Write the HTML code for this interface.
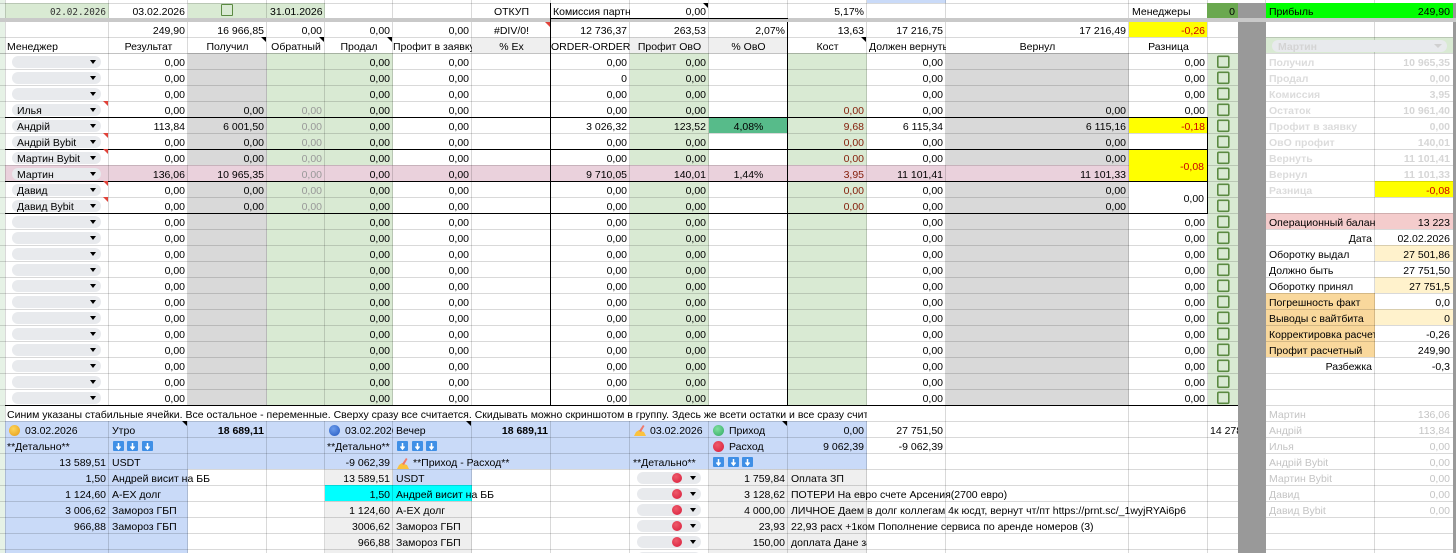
<!DOCTYPE html>
<html><head><meta charset="utf-8"><title>Sheet</title>
<style>
html,body{margin:0;padding:0;background:#fff}
#p{position:relative;width:1456px;height:553px;overflow:hidden;font:10.5px/13px "Liberation Sans",Arial,sans-serif;color:#000}
.r{position:absolute}
table{position:absolute;left:0;top:0;border-collapse:separate;border-spacing:0;table-layout:fixed;width:1456px}
td{padding:0 3px;text-align:right;vertical-align:bottom;white-space:nowrap;height:16px;line-height:11px;box-sizing:border-box}
tr.z td{height:3px;line-height:0;padding:0}tr.a td{height:15px}tr.s td{height:4px;line-height:0;padding:0}
.l{text-align:left}.c{text-align:center}.x{overflow:hidden;text-align:left}
.g{color:#999}.d{color:#85200c}.y{color:#c00}.p{color:#d6d6d6;font-weight:bold}.pl{color:#dcdcdc;font-weight:bold;text-align:left}
.q{color:#c4c4c4}.ql{color:#c4c4c4;text-align:left}.b{font-weight:bold}.f{padding-left:20px}
.m{font-family:"DejaVu Sans Mono",monospace;font-size:9.3px;color:#333}
.k{position:absolute;left:12px;width:89px;height:12px;border-radius:6px;background:#e8eaed;font-size:10.5px;line-height:14px;text-indent:5px}
.k:after{content:"";position:absolute;right:5px;top:4px;border:3px solid transparent;border-top:4px solid #000;border-bottom:0}
.e{position:absolute;left:637px;width:64px;height:12px;border-radius:6px;background:#e8eaed}
.e:before{content:"";position:absolute;left:35px;top:1px;width:10px;height:10px;border-radius:50%;background:radial-gradient(circle at 40% 35%,#ee5a6a,#d81b3a)}
.e:after{content:"";position:absolute;right:5px;top:4px;border:3px solid transparent;border-top:4px solid #000;border-bottom:0}
.t{position:absolute;width:0;height:0;border-left:5px solid transparent;border-top:5px solid #000}
.t.n{border-top-color:#e0433a}
.o{position:absolute;width:11px;height:11px;border-radius:50%}
.cb{position:absolute;width:12px;height:12px;box-sizing:border-box;border:1.5px solid #5b8a42;border-radius:1px}
svg{position:absolute;overflow:visible}
</style></head><body><div id="p">
<!-- backgrounds -->
<div class="r" style="left:0;top:0;width:5px;height:553px;background:#e6f2e6"></div>
<div class="r" style="left:5px;top:3px;width:104px;height:15px;background:#d9ead3"></div>
<div class="r" style="left:188px;top:3px;width:137px;height:15px;background:#d9ead3"></div>
<div class="r" style="left:867px;top:0;width:79px;height:3px;background:#c9daf8"></div>
<div class="r" style="left:1129px;top:22px;width:78px;height:15px;background:#ff0"></div>
<div class="r" style="left:472px;top:37px;width:79px;height:16px;background:#efefef"></div>
<div class="r" style="left:630px;top:37px;width:158px;height:16px;background:#efefef"></div>
<div class="r" style="left:188px;top:53px;width:79px;height:352px;background:#d9d9d9"></div>
<div class="r" style="left:267px;top:53px;width:126px;height:352px;background:#d9ead3"></div>
<div class="r" style="left:630px;top:53px;width:79px;height:352px;background:#d9ead3"></div>
<div class="r" style="left:788px;top:53px;width:79px;height:352px;background:#d9ead3"></div>
<div class="r" style="left:946px;top:53px;width:183px;height:352px;background:#d9d9d9"></div>
<div class="r" style="left:1208px;top:53px;width:30px;height:352px;background:#d9ead3"></div>
<div class="r" style="left:5px;top:165px;width:1124px;height:16px;background:#ead1dc"></div>
<div class="r" style="left:709px;top:117px;width:79px;height:16px;background:#57bb8a"></div>
<div class="r" style="left:1129px;top:117px;width:78px;height:16px;background:#ff0"></div>
<div class="r" style="left:1266px;top:37px;width:187px;height:16px;background:#d9ead3"></div>
<div class="r" style="left:1375px;top:181px;width:78px;height:16px;background:#ff0"></div>
<div class="r" style="left:1266px;top:213px;width:187px;height:16px;background:#f4cccc"></div>
<div class="r" style="left:1375px;top:245px;width:78px;height:16px;background:#fff2cc"></div>
<div class="r" style="left:1375px;top:277px;width:78px;height:16px;background:#fff2cc"></div>
<div class="r" style="left:1375px;top:309px;width:78px;height:16px;background:#fff2cc"></div>
<div class="r" style="left:1266px;top:293px;width:109px;height:64px;background:#f9d89c"></div>
<div class="r" style="left:5px;top:421px;width:862px;height:48px;background:#c9daf8"></div>
<div class="r" style="left:5px;top:469px;width:183px;height:84px;background:#c9daf8"></div>
<div class="r" style="left:325px;top:469px;width:68px;height:16px;background:#efefef"></div>
<div class="r" style="left:393px;top:469px;width:79px;height:16px;background:#c9daf8"></div>
<div class="r" style="left:325px;top:485px;width:147px;height:16px;background:#0ff"></div>
<div class="r" style="left:325px;top:501px;width:147px;height:52px;background:#efefef"></div>
<div class="r" style="left:709px;top:469px;width:158px;height:84px;background:#efefef"></div>
<!-- grid -->
<div class="r" style="left:0;top:0;width:1456px;height:553px;--g:linear-gradient(rgba(0,0,0,.15),rgba(0,0,0,.15));background:var(--g) 5px 0/1px 100% no-repeat,var(--g) 108px 0/1px 100% no-repeat,var(--g) 187px 0/1px 100% no-repeat,var(--g) 266px 0/1px 100% no-repeat,var(--g) 324px 0/1px 100% no-repeat,var(--g) 392px 0/1px 100% no-repeat,var(--g) 471px 0/1px 100% no-repeat,var(--g) 550px 0/1px 100% no-repeat,var(--g) 629px 0/1px 100% no-repeat,var(--g) 708px 0/1px 100% no-repeat,var(--g) 787px 0/1px 100% no-repeat,var(--g) 866px 0/1px 100% no-repeat,var(--g) 945px 0/1px 100% no-repeat,var(--g) 1128px 0/1px 100% no-repeat,var(--g) 1207px 0/1px 100% no-repeat,var(--g) 1265px 0/1px 100% no-repeat,var(--g) 1374px 0/1px 100% no-repeat,var(--g) 0 3px/100% 1px no-repeat,var(--g) 0 37px/100% 1px no-repeat"></div>
<div class="r" style="left:0;top:53px;width:1456px;height:500px;background:repeating-linear-gradient(to bottom,rgba(0,0,0,.15) 0 1px,transparent 1px 16px)"></div>
<div class="r" style="left:0;top:53px;width:1238px;height:1px;background:rgba(0,0,0,.1)"></div>
<!-- covers -->
<div class="r" style="left:6px;top:406px;width:861px;height:15px;background:#fff"></div>
<div class="r" style="left:1129px;top:150px;width:78px;height:31px;background:#ff0"></div>
<div class="r" style="left:1129px;top:182px;width:78px;height:31px;background:#fff"></div>
<div class="r" style="left:1238px;top:3px;width:28px;height:550px;background:#999"></div>
<div class="r" style="left:1453px;top:3px;width:3px;height:550px;background:#999"></div>
<div class="r" style="left:1207px;top:3px;width:31px;height:15px;background:#6aa84f"></div>
<div class="r" style="left:1266px;top:3px;width:187px;height:15px;background:#0f0"></div>
<div class="r" style="left:0;top:18px;width:1456px;height:4px;background:#c9c9c9"></div>
<!-- black lines -->
<div class="r" style="left:551px;top:18px;width:237px;height:1px;background:#000"></div>
<div class="r" style="left:550px;top:3px;width:1px;height:402px;background:#000"></div>
<div class="r" style="left:787px;top:22px;width:1px;height:383px;background:#000"></div>
<div class="r" style="left:1207px;top:117px;width:1px;height:96px;background:#000"></div>
<div class="r" style="left:5px;top:117px;width:1203px;height:1px;background:#000"></div>
<div class="r" style="left:5px;top:149px;width:1203px;height:1px;background:#000"></div>
<div class="r" style="left:5px;top:181px;width:1203px;height:1px;background:#000"></div>
<div class="r" style="left:5px;top:213px;width:1203px;height:1px;background:#000"></div>
<div class="r" style="left:5px;top:405px;width:1233px;height:1px;background:#000"></div>
<!-- text table -->
<table><colgroup><col style="width:5px"><col style="width:104px"><col style="width:79px"><col style="width:79px"><col style="width:58px"><col style="width:68px"><col style="width:79px"><col style="width:79px"><col style="width:79px"><col style="width:79px"><col style="width:79px"><col style="width:79px"><col style="width:79px"><col style="width:183px"><col style="width:79px"><col style="width:30px"><col style="width:28px"><col style="width:109px"><col style="width:78px"><col style="width:3px"></colgroup>
<tr class="z"><td><td><td><td><td><td><td><td><td><td><td><td><td><td><td><td><td><td><td><td></tr>
<tr class="a"><td><td class="m">02.02.2026<td>03.02.2026<td><td>31.01.2026<td><td><td class="c">ОТКУП<td class="x" style="padding-left:2px">Комиссия партн<td>0,00<td><td>5,17%<td><td><td class="x">Менеджеры<td>0<td><td class="l">Прибыль<td>249,90<td></tr>
<tr class="s"><td><td><td><td><td><td><td><td><td><td><td><td><td><td><td><td><td><td><td><td></tr>
<tr class="a"><td><td><td>249,90<td>16 966,85<td>0,00<td>0,00<td>0,00<td class="c">#DIV/0!<td>12 736,37<td>263,53<td>2,07%<td>13,63<td>17 216,75<td>17 216,49<td class="y">-0,26<td><td><td><td><td></tr>
<tr><td><td class="l" style="padding-left:2px">Менеджер<td class="c">Результат<td class="c">Получил<td class="c">Обратный<td class="c">Продал<td class="x" style="padding-left:0;padding-right:0">Профит в заявку<td class="c">% Ex<td class="x" style="padding-left:0;padding-right:0">ORDER-ORDER<td class="c">Профит ОвО<td class="c">% ОвО<td class="c">Кост<td class="x" style="padding-left:2px;padding-right:0">Должен вернуть<td class="c">Вернул<td class="c">Разница<td><td><td><td><td></tr>
<tr><td><td><td>0,00<td><td><td>0,00<td>0,00<td><td>0,00<td>0,00<td><td><td>0,00<td><td>0,00<td><td><td class="pl">Получил<td class="p">10 965,35<td></tr>
<tr><td><td><td>0,00<td><td><td>0,00<td>0,00<td><td>0<td>0,00<td><td><td>0,00<td><td>0,00<td><td><td class="pl">Продал<td class="p">0,00<td></tr>
<tr><td><td><td>0,00<td><td><td>0,00<td>0,00<td><td>0,00<td>0,00<td><td><td>0,00<td><td>0,00<td><td><td class="pl">Комиссия<td class="p">3,95<td></tr>
<tr><td><td><td>0,00<td>0,00<td class="g">0,00<td>0,00<td>0,00<td><td>0,00<td>0,00<td><td class="d">0,00<td>0,00<td>0,00<td>0,00<td><td><td class="pl">Остаток<td class="p">10 961,40<td></tr>
<tr><td><td><td>113,84<td>6 001,50<td class="g">0,00<td>0,00<td>0,00<td><td>3 026,32<td>123,52<td class="c">4,08%<td class="d">9,68<td>6 115,34<td>6 115,16<td class="y">-0,18<td><td><td class="pl">Профит в заявку<td class="p">0,00<td></tr>
<tr><td><td><td>0,00<td>0,00<td class="g">0,00<td>0,00<td>0,00<td><td>0,00<td>0,00<td><td class="d">0,00<td>0,00<td>0,00<td><td><td><td class="pl">ОвО профит<td class="p">140,01<td></tr>
<tr><td><td><td>0,00<td>0,00<td class="g">0,00<td>0,00<td>0,00<td><td>0,00<td>0,00<td><td class="d">0,00<td>0,00<td>0,00<td><td><td><td class="pl">Вернуть<td class="p">11 101,41<td></tr>
<tr><td><td><td>136,06<td>10 965,35<td class="g">0,00<td>0,00<td>0,00<td><td>9 710,05<td>140,01<td class="c">1,44%<td class="d">3,95<td>11 101,41<td>11 101,33<td><td><td><td class="pl">Вернул<td class="p">11 101,33<td></tr>
<tr><td><td><td>0,00<td>0,00<td class="g">0,00<td>0,00<td>0,00<td><td>0,00<td>0,00<td><td class="d">0,00<td>0,00<td>0,00<td><td><td><td class="pl">Разница<td class="y">-0,08<td></tr>
<tr><td><td><td>0,00<td>0,00<td class="g">0,00<td>0,00<td>0,00<td><td>0,00<td>0,00<td><td class="d">0,00<td>0,00<td>0,00<td><td><td><td><td><td></tr>
<tr><td><td><td>0,00<td><td><td>0,00<td>0,00<td><td>0,00<td>0,00<td><td><td>0,00<td><td>0,00<td><td><td class="x">Операционный балан<td>13 223<td></tr>
<tr><td><td><td>0,00<td><td><td>0,00<td>0,00<td><td>0,00<td>0,00<td><td><td>0,00<td><td>0,00<td><td><td>Дата<td>02.02.2026<td></tr>
<tr><td><td><td>0,00<td><td><td>0,00<td>0,00<td><td>0,00<td>0,00<td><td><td>0,00<td><td>0,00<td><td><td class="l">Оборотку выдал<td>27 501,86<td></tr>
<tr><td><td><td>0,00<td><td><td>0,00<td>0,00<td><td>0,00<td>0,00<td><td><td>0,00<td><td>0,00<td><td><td class="l">Должно быть<td>27 751,50<td></tr>
<tr><td><td><td>0,00<td><td><td>0,00<td>0,00<td><td>0,00<td>0,00<td><td><td>0,00<td><td>0,00<td><td><td class="l">Оборотку принял<td>27 751,5<td></tr>
<tr><td><td><td>0,00<td><td><td>0,00<td>0,00<td><td>0,00<td>0,00<td><td><td>0,00<td><td>0,00<td><td><td class="l">Погрешность факт<td>0,0<td></tr>
<tr><td><td><td>0,00<td><td><td>0,00<td>0,00<td><td>0,00<td>0,00<td><td><td>0,00<td><td>0,00<td><td><td class="l">Выводы с вайтбита<td>0<td></tr>
<tr><td><td><td>0,00<td><td><td>0,00<td>0,00<td><td>0,00<td>0,00<td><td><td>0,00<td><td>0,00<td><td><td class="x" style="padding-right:0">Корректировка расчет<td>-0,26<td></tr>
<tr><td><td><td>0,00<td><td><td>0,00<td>0,00<td><td>0,00<td>0,00<td><td><td>0,00<td><td>0,00<td><td><td class="l">Профит расчетный<td>249,90<td></tr>
<tr><td><td><td>0,00<td><td><td>0,00<td>0,00<td><td>0,00<td>0,00<td><td><td>0,00<td><td>0,00<td><td><td>Разбежка<td>-0,3<td></tr>
<tr><td><td><td>0,00<td><td><td>0,00<td>0,00<td><td>0,00<td>0,00<td><td><td>0,00<td><td>0,00<td><td><td><td><td></tr>
<tr><td><td><td>0,00<td><td><td>0,00<td>0,00<td><td>0,00<td>0,00<td><td><td>0,00<td><td>0,00<td><td><td><td><td></tr>
<tr><td><td colspan="11" class="x" style="padding-left:2px;padding-right:0">Синим указаны стабильные ячейки. Все остальное - переменные. Сверху сразу все считается. Скидывать можно скриншотом в группу. Здесь же всети остатки и все сразу считается<td><td><td><td><td><td class="ql">Мартин<td class="q">136,06<td></tr>
<tr><td><td class="l f">03.02.2026<td class="l">Утро<td class="b">18 689,11<td><td class="x f" style="padding-right:0">03.02.2026<td class="l">Вечер<td class="b">18 689,11<td><td class="l f">03.02.2026<td class="l f">Приход<td>0,00<td>27 751,50<td><td><td class="x" style="padding-left:2px;padding-right:0">14 278<td><td class="ql">Андрій<td class="q">113,84<td></tr>
<tr><td><td class="l" style="padding-left:2px">**Детально**<td><td><td><td class="l" style="padding-left:2px;padding-right:0">**Детально**<td><td><td><td><td class="l f">Расход<td>9 062,39<td>-9 062,39<td><td><td><td><td class="ql">Илья<td class="q">0,00<td></tr>
<tr><td><td>13 589,51<td class="l">USDT<td><td><td>-9 062,39<td class="l f">**Приход - Расход**<td><td><td class="l">**Детально**<td><td><td><td><td><td><td><td class="ql">Андрій Bybit<td class="q">0,00<td></tr>
<tr><td><td>1,50<td class="l">Андрей висит на ББ<td><td><td>13 589,51<td class="l">USDT<td><td><td><td>1 759,84<td class="l">Оплата ЗП<td><td><td><td><td><td class="ql">Мартин Bybit<td class="q">0,00<td></tr>
<tr><td><td>1 124,60<td class="l">А-ЕХ долг<td><td><td>1,50<td class="l">Андрей висит на ББ<td><td><td><td>3 128,62<td class="l">ПОТЕРИ На евро счете Арсения(2700 евро)<td><td><td><td><td><td class="ql">Давид<td class="q">0,00<td></tr>
<tr><td><td>3 006,62<td class="l">Замороз ГБП<td><td><td>1 124,60<td class="l">А-ЕХ долг<td><td><td><td>4 000,00<td class="l">ЛИЧНОЕ Даем в долг коллегам 4к юсдт, вернут чт/пт https://prnt.sc/_1wyjRYAi6p6<td><td><td><td><td><td class="ql">Давид Bybit<td class="q">0,00<td></tr>
<tr><td><td>966,88<td class="l">Замороз ГБП<td><td><td>3006,62<td class="l">Замороз ГБП<td><td><td><td>23,93<td class="l">22,93 расх +1ком Пополнение сервиса по аренде номеров (3)<td><td><td><td><td><td><td><td></tr>
<tr><td><td><td><td><td><td>966,88<td class="l">Замороз ГБП<td><td><td><td>150,00<td class="x" style="padding-right:0">доплата Дане за<td><td><td><td><td><td><td><td></tr>
</table>
<!-- merged cell text -->
<div class="r" style="left:1129px;top:161px;width:75px;height:13px;text-align:right;color:#c00">-0,08</div>
<div class="r" style="left:1129px;top:193px;width:75px;height:13px;text-align:right">0,00</div>
<!-- chips -->
<div class="k" style="top:56px"></div><div class="k" style="top:72px"></div><div class="k" style="top:88px"></div>
<div class="k" style="top:104px">Илья</div><div class="k" style="top:120px">Андрій</div><div class="k" style="top:136px">Андрій Bybit</div>
<div class="k" style="top:152px">Мартин Bybit</div><div class="k" style="top:168px">Мартин</div><div class="k" style="top:184px">Давид</div><div class="k" style="top:200px">Давид Bybit</div>
<div class="k" style="top:216px"></div><div class="k" style="top:232px"></div><div class="k" style="top:248px"></div><div class="k" style="top:264px"></div><div class="k" style="top:280px"></div><div class="k" style="top:296px"></div><div class="k" style="top:312px"></div><div class="k" style="top:328px"></div><div class="k" style="top:344px"></div><div class="k" style="top:360px"></div><div class="k" style="top:376px"></div><div class="k" style="top:392px"></div>
<div class="e" style="top:472px"></div><div class="e" style="top:488px"></div><div class="e" style="top:504px"></div><div class="e" style="top:520px"></div><div class="e" style="top:536px"></div><div class="e" style="top:552px"></div>
<div class="r" style="left:1272px;top:40px;width:175px;height:12px;border-radius:6px;background:#e8eaed;color:#d4d4d4;font-weight:bold;text-indent:6px;line-height:14px">Мартин<span class="r" style="right:5px;top:4px;border:4px solid transparent;border-top:4px solid #d0d0d0;border-bottom:0"></span></div>
<!-- checkboxes -->
<div class="cb" style="left:221px;top:4px"></div>
<svg style="left:1217px;top:53px" width="13" height="352"><defs><pattern id="cbp" width="13" height="16" patternUnits="userSpaceOnUse"><rect x=".8" y="3.3" width="11" height="11" rx="1" fill="none" stroke="#5b8a42" stroke-width="1.6"/></pattern></defs><rect width="13" height="352" fill="url(#cbp)"/></svg>
<!-- triangles -->
<i class="t n" style="left:103px;top:101px"></i><i class="t n" style="left:103px;top:133px"></i><i class="t n" style="left:103px;top:149px"></i><i class="t n" style="left:103px;top:181px"></i><i class="t n" style="left:103px;top:197px"></i><i class="t n" style="left:545px;top:22px"></i>
<i class="t" style="left:261px;top:37px"></i><i class="t" style="left:319px;top:37px"></i><i class="t" style="left:387px;top:37px"></i><i class="t" style="left:703px;top:3px"></i><i class="t" style="left:861px;top:37px"></i><i class="t" style="left:182px;top:421px"></i><i class="t" style="left:466px;top:421px"></i><i class="t" style="left:782px;top:421px"></i>
<!-- emoji -->
<div class="o" style="left:9px;top:425px;background:radial-gradient(circle at 40% 35%,#fdd55c,#e59a14)"></div>
<div class="o" style="left:329px;top:425px;background:radial-gradient(circle at 40% 35%,#6b9cec,#2458c0)"></div>
<div class="o" style="left:713px;top:425px;background:radial-gradient(circle at 40% 35%,#7fe0a0,#2fa862)"></div>
<div class="o" style="left:713px;top:441px;background:radial-gradient(circle at 40% 35%,#ee5a6a,#d81b3a)"></div>
<svg style="left:634px;top:425px" width="12" height="11" viewBox="0 0 12 11"><path d="M0 11 2 7 5 5 7 6 10 7 12 11Z" fill="#fbc23e"/><path d="M5 6 9 0 10.5 1 7 7Z" fill="#f0796a"/></svg>
<svg style="left:397px;top:458px" width="12" height="11" viewBox="0 0 12 11"><path d="M0 11 2 7 5 5 7 6 10 7 12 11Z" fill="#fbc23e"/><path d="M5 6 9 0 10.5 1 7 7Z" fill="#f0796a"/></svg>
<!-- arrow squares -->
<svg width="0" height="0" style="left:0;top:0"><defs><symbol id="ar" viewBox="0 0 11 10"><rect width="11" height="10" rx="1" fill="#3f8fe6"/><path d="M5.5 2V7M3.5 5.5 5.5 8 7.5 5.5" fill="none" stroke="#fff" stroke-width="1.5"/></symbol></defs></svg>
<svg style="left:113px;top:441px" width="11" height="10"><use href="#ar"/></svg><svg style="left:127px;top:441px" width="11" height="10"><use href="#ar"/></svg><svg style="left:142px;top:441px" width="11" height="10"><use href="#ar"/></svg>
<svg style="left:397px;top:441px" width="11" height="10"><use href="#ar"/></svg><svg style="left:412px;top:441px" width="11" height="10"><use href="#ar"/></svg><svg style="left:426px;top:441px" width="11" height="10"><use href="#ar"/></svg>
<svg style="left:713px;top:457px" width="11" height="10"><use href="#ar"/></svg><svg style="left:728px;top:457px" width="11" height="10"><use href="#ar"/></svg><svg style="left:742px;top:457px" width="11" height="10"><use href="#ar"/></svg>
</div></body></html>
